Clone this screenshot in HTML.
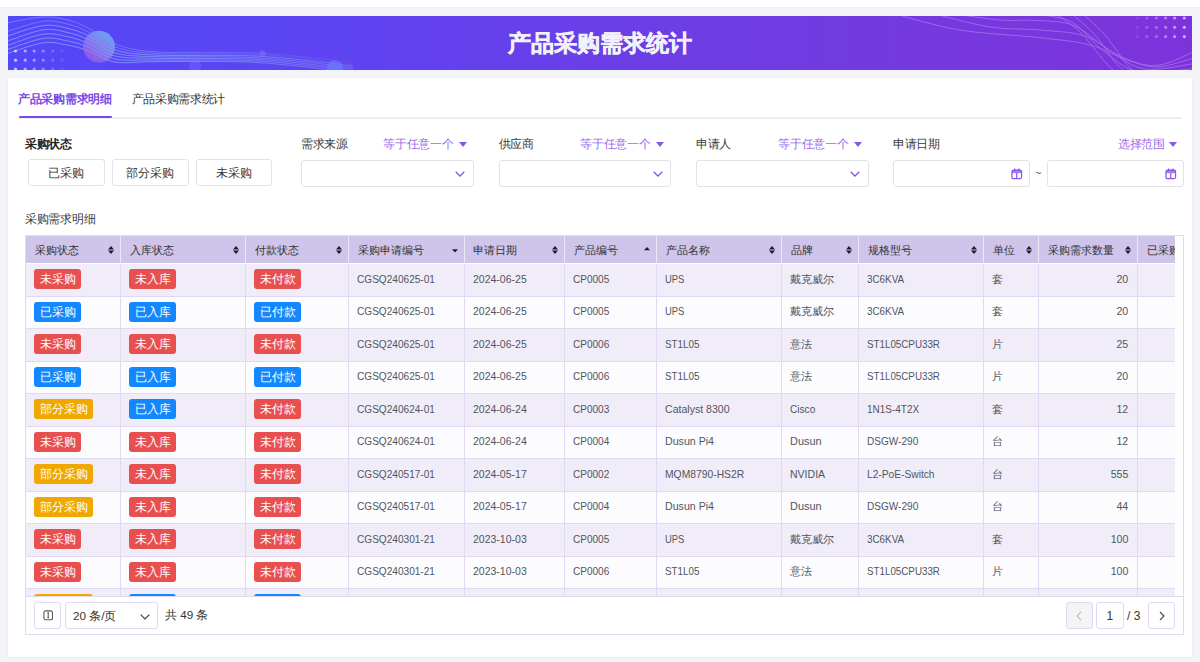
<!DOCTYPE html>
<html><head><meta charset="utf-8">
<style>
*{box-sizing:border-box;margin:0;padding:0}
html,body{width:1200px;height:662px;overflow:hidden}
body{background:#f3f4f8;font-family:"Liberation Sans",sans-serif;position:relative;color:#333}
.topw{position:absolute;left:0;top:0;width:1200px;height:7px;background:#fff;box-shadow:0 0 2px rgba(0,0,0,0.06)}
.banner{position:absolute;left:8px;top:16px;width:1184px;height:54px;overflow:hidden;
 background:linear-gradient(90deg,#5347f8 0%,#5a45f4 20%,#6e3de4 58%,#7d33db 100%)}
.banner .title{position:absolute;left:0;top:0;width:1184px;height:54px;line-height:54px;text-align:center;color:#f2f0f8;font-size:22.8px;font-weight:bold;letter-spacing:0;-webkit-text-stroke:0.5px #f2f0f8}
.card{position:absolute;left:8px;top:78px;width:1184px;height:579px;background:#fff;box-shadow:0 1px 3px rgba(20,20,60,0.05)}
.abs{position:absolute;white-space:nowrap}
.tab1{color:#7a47e6;font-weight:bold;font-size:11.8px;letter-spacing:-0.3px}
.tab2{color:#333;font-size:11.8px;letter-spacing:-0.3px}
.lbl{font-size:11.7px;letter-spacing:-0.3px;color:#3a3a3a}
.lblb{font-size:11.7px;letter-spacing:-0.3px;color:#222;font-weight:bold}
.eq{font-size:11.7px;letter-spacing:-0.3px;color:#9a6ce8}
.btn{position:absolute;top:159px;width:76.5px;height:26.5px;border:1px solid #e3e3e6;border-radius:3px;background:#fff;font-size:11.7px;color:#333;text-align:center;line-height:26.5px}
.sel{position:absolute;top:160px;height:26.5px;border:1px solid #e3e3e6;border-radius:3px;background:#fff}
.tbox{position:absolute;left:25px;top:235px;width:1159px;height:400px;border:1px solid #e2daf3}
.hdr{position:absolute;left:26px;width:1149px;background:#cfc4ea}
.ht{position:absolute;font-size:10.8px;color:#333;white-space:nowrap}
.si{position:absolute;fill:#1c1c24}
.hsep{position:absolute;width:1px;background:#ece6f7}
.row{position:absolute;left:26px;width:1149px}
.odd{background:#f0edf8}
.even{background:#fcfcfe}
.rsep{position:absolute;left:26px;width:1149px;height:1px;background:#e1d8f2}
.bsep{position:absolute;width:1px;background:#e1d8f2}
.bd{position:absolute;height:20px;line-height:20px;padding:0 5.3px;border-radius:3px;font-size:11.7px;color:#fff;white-space:nowrap}
.bd.r{background:#e85050}
.bd.b{background:#1387fd}
.bd.o{background:#f0a800}
.tx{position:absolute;font-size:11px;color:#50555f;white-space:nowrap}
.clip{position:absolute;left:0;top:0;width:1175px;height:596px;overflow:hidden}
.pbtn{position:absolute;top:602px;height:26.5px;border:1px solid #e0d8f4;border-radius:3px;background:#fff}
</style></head><body>
<div class="topw"></div>
<div class="banner">
<svg width="1184" height="54" viewBox="0 0 1184 54" style="position:absolute;left:0;top:0">
 <defs>
  <linearGradient id="cg" x1="0.85" y1="0.1" x2="0.2" y2="0.9">
   <stop offset="0" stop-color="#70a8f6"/><stop offset="1" stop-color="#9356e8"/>
  </linearGradient>
  <linearGradient id="lg" gradientUnits="userSpaceOnUse" x1="0" y1="0" x2="340" y2="0">
   <stop offset="0" stop-color="#8fb0ff" stop-opacity="1"/><stop offset="0.45" stop-color="#8fb0ff" stop-opacity="0.9"/><stop offset="1" stop-color="#8fb0ff" stop-opacity="0.15"/>
  </linearGradient>
 </defs>
 <g fill="none" stroke="url(#lg)" stroke-width="0.8" opacity="0.6">
  <path d="M-2.0 7.0 C4.2 6.0 24.7 1.5 35.0 1.0 C45.3 0.5 52.5 2.2 60.0 4.0 C67.5 5.8 72.2 8.0 80.0 12.0 C87.8 16.0 95.3 24.0 107.0 28.0 C118.7 32.0 126.2 34.5 150.0 36.0 C173.8 37.5 217.5 35.3 250.0 37.0 C282.5 38.7 329.2 44.5 345.0 46.0"/>
  <path d="M-2.0 15.8 C4.2 14.1 24.7 6.6 35.0 5.3 C45.3 4.0 52.5 6.4 60.0 8.2 C67.5 9.9 72.2 12.0 80.0 15.8 C87.8 19.6 95.3 27.4 107.0 31.0 C118.7 34.6 126.2 36.3 150.0 37.6 C173.8 38.9 217.5 36.9 250.0 38.6 C282.5 40.3 329.2 46.3 345.0 47.8"/>
  <path d="M-2.0 20.5 C4.2 18.7 24.7 10.9 35.0 9.6 C45.3 8.2 52.5 10.7 60.0 12.4 C67.5 14.1 72.2 16.0 80.0 19.6 C87.8 23.2 95.3 30.7 107.0 34.0 C118.7 37.3 126.2 38.2 150.0 39.2 C173.8 40.2 217.5 38.5 250.0 40.2 C282.5 41.9 329.2 48.0 345.0 49.6"/>
  <path d="M-2.0 25.5 C4.2 23.6 24.7 15.4 35.0 13.9 C45.3 12.4 52.5 15.0 60.0 16.6 C67.5 18.2 72.2 20.0 80.0 23.4 C87.8 26.8 95.3 34.1 107.0 37.0 C118.7 39.9 126.2 40.0 150.0 40.8 C173.8 41.6 217.5 40.0 250.0 41.8 C282.5 43.6 329.2 49.8 345.0 51.4"/>
  <path d="M-2.0 30.0 C4.2 28.0 24.7 19.7 35.0 18.2 C45.3 16.7 52.5 19.3 60.0 20.8 C67.5 22.3 72.2 24.0 80.0 27.2 C87.8 30.4 95.3 37.5 107.0 40.0 C118.7 42.5 126.2 41.8 150.0 42.4 C173.8 43.0 217.5 41.6 250.0 43.4 C282.5 45.2 329.2 51.6 345.0 53.2"/>
  <path d="M-2.0 34.0 C4.2 32.1 24.7 24.0 35.0 22.5 C45.3 21.0 52.5 23.6 60.0 25.0 C67.5 26.4 72.2 28.0 80.0 31.0 C87.8 34.0 95.3 40.8 107.0 43.0 C118.7 45.2 126.2 43.7 150.0 44.0 C173.8 44.3 217.5 43.2 250.0 45.0 C282.5 46.8 329.2 53.3 345.0 55.0"/>
  <path d="M-2.0 38.0 C4.2 36.1 24.7 28.3 35.0 26.8 C45.3 25.3 52.5 27.9 60.0 29.2 C67.5 30.5 72.2 32.0 80.0 34.8 C87.8 37.6 95.3 44.2 107.0 46.0 C118.7 47.8 126.2 45.5 150.0 45.6 C173.8 45.7 217.5 44.7 250.0 46.6 C282.5 48.5 329.2 55.1 345.0 56.8"/>
 </g>
 <circle cx="91" cy="30.7" r="15.9" fill="url(#cg)" opacity="0.95"/>
 <g fill="none" stroke="#a8c4ff" stroke-width="0.7" opacity="0.35">
  <path d="M-2.0 20.5 C4.2 18.7 24.7 10.9 35.0 9.6 C45.3 8.2 52.5 10.7 60.0 12.4 C67.5 14.1 72.2 16.0 80.0 19.6 C87.8 23.2 95.3 30.7 107.0 34.0 C118.7 37.3 126.2 38.2 150.0 39.2 C173.8 40.2 217.5 38.5 250.0 40.2 C282.5 41.9 329.2 48.0 345.0 49.6"/>
  <path d="M-2.0 25.5 C4.2 23.6 24.7 15.4 35.0 13.9 C45.3 12.4 52.5 15.0 60.0 16.6 C67.5 18.2 72.2 20.0 80.0 23.4 C87.8 26.8 95.3 34.1 107.0 37.0 C118.7 39.9 126.2 40.0 150.0 40.8 C173.8 41.6 217.5 40.0 250.0 41.8 C282.5 43.6 329.2 49.8 345.0 51.4"/>
  <path d="M-2.0 30.0 C4.2 28.0 24.7 19.7 35.0 18.2 C45.3 16.7 52.5 19.3 60.0 20.8 C67.5 22.3 72.2 24.0 80.0 27.2 C87.8 30.4 95.3 37.5 107.0 40.0 C118.7 42.5 126.2 41.8 150.0 42.4 C173.8 43.0 217.5 41.6 250.0 43.4 C282.5 45.2 329.2 51.6 345.0 53.2"/>
  <path d="M-2.0 34.0 C4.2 32.1 24.7 24.0 35.0 22.5 C45.3 21.0 52.5 23.6 60.0 25.0 C67.5 26.4 72.2 28.0 80.0 31.0 C87.8 34.0 95.3 40.8 107.0 43.0 C118.7 45.2 126.2 43.7 150.0 44.0 C173.8 44.3 217.5 43.2 250.0 45.0 C282.5 46.8 329.2 53.3 345.0 55.0"/>
  <path d="M-2.0 38.0 C4.2 36.1 24.7 28.3 35.0 26.8 C45.3 25.3 52.5 27.9 60.0 29.2 C67.5 30.5 72.2 32.0 80.0 34.8 C87.8 37.6 95.3 44.2 107.0 46.0 C118.7 47.8 126.2 45.5 150.0 45.6 C173.8 45.7 217.5 44.7 250.0 46.6 C282.5 48.5 329.2 55.1 345.0 56.8"/>
 </g>
 <circle cx="254.5" cy="37.3" r="3" fill="#8fa8ff" opacity="0.25"/>
 <circle cx="187.3" cy="49.8" r="6" fill="#8fa8ff" opacity="0.18"/>
 <circle cx="327" cy="52" r="8" fill="#70a0ff" opacity="0.35"/>
 <g fill="#fff">
  <circle cx="7.5" cy="35" r="1.6" opacity="0.65"/><circle cx="17.2" cy="35" r="1.6" opacity="0.55"/><circle cx="26.2" cy="35" r="1.6" opacity="0.45"/><circle cx="35.2" cy="35" r="1.6" opacity="0.35"/><circle cx="44.8" cy="35" r="1.6" opacity="0.22"/><circle cx="54" cy="35" r="1.6" opacity="0.1"/>
  <circle cx="7.5" cy="44.2" r="1.6" opacity="0.65"/><circle cx="17.2" cy="44.2" r="1.6" opacity="0.55"/><circle cx="26.2" cy="44.2" r="1.6" opacity="0.45"/><circle cx="35.2" cy="44.2" r="1.6" opacity="0.35"/><circle cx="44.8" cy="44.2" r="1.6" opacity="0.22"/><circle cx="54" cy="44.2" r="1.6" opacity="0.1"/>
  <circle cx="7.5" cy="53" r="1.6" opacity="0.65"/><circle cx="17.2" cy="53" r="1.6" opacity="0.55"/><circle cx="26.2" cy="53" r="1.6" opacity="0.45"/><circle cx="35.2" cy="53" r="1.6" opacity="0.35"/><circle cx="44.8" cy="53" r="1.6" opacity="0.22"/><circle cx="54" cy="53" r="1.6" opacity="0.1"/>
 </g>
 <g fill="none" stroke="#c09cf6" stroke-width="0.8" opacity="0.6" transform="translate(-8,-16)">
  <path d="M895.0 14.0 C905.8 16.7 935.8 26.1 960.0 30.0 C984.2 34.0 1018.3 35.2 1040.0 37.7 C1061.7 40.2 1075.0 41.1 1090.0 45.0 C1105.0 48.9 1118.3 57.7 1130.0 61.0 C1141.7 64.3 1149.3 66.6 1160.0 65.0 C1170.7 63.4 1188.3 53.8 1194.0 51.6"/>
  <path d="M935.0 14.0 C944.2 16.2 972.5 24.3 990.0 27.0 C1007.5 29.7 1024.2 28.5 1040.0 30.0 C1055.8 31.5 1071.7 31.7 1085.0 36.0 C1098.3 40.3 1108.3 50.8 1120.0 56.0 C1131.7 61.2 1142.7 66.7 1155.0 67.0 C1167.3 67.3 1187.5 59.5 1194.0 58.0"/>
  <path d="M955.0 14.0 C962.5 15.0 985.8 18.9 1000.0 20.0 C1014.2 21.1 1027.5 19.5 1040.0 20.5 C1052.5 21.5 1063.3 20.9 1075.0 26.0 C1086.7 31.1 1098.3 43.8 1110.0 51.0 C1121.7 58.2 1131.0 66.9 1145.0 69.0 C1159.0 71.1 1185.8 64.5 1194.0 63.6"/>
  <path d="M1030.0 14.0 C1034.2 14.5 1047.5 15.3 1055.0 17.0 C1062.5 18.7 1067.5 18.8 1075.0 24.0 C1082.5 29.2 1090.8 40.5 1100.0 48.0 C1109.2 55.5 1120.0 65.0 1130.0 69.0 C1140.0 73.0 1149.3 72.1 1160.0 72.0 C1170.7 71.9 1188.3 69.0 1194.0 68.4"/>
  <path d="M1056.0 14.0 C1060.0 17.0 1071.8 24.0 1080.0 32.0 C1088.2 40.0 1099.0 55.3 1105.0 62.0 C1111.0 68.7 1114.2 70.3 1116.0 72.0"/>
  <path d="M1072.0 14.0 C1075.8 17.5 1087.8 27.0 1095.0 35.0 C1102.2 43.0 1109.8 55.8 1115.0 62.0 C1120.2 68.2 1124.2 70.3 1126.0 72.0"/>
  <path d="M1083.0 14.0 C1086.7 17.5 1098.0 27.0 1105.0 35.0 C1112.0 43.0 1120.0 55.8 1125.0 62.0 C1130.0 68.2 1133.3 70.3 1135.0 72.0"/>
 </g>
 <g fill="#fff">
  <circle cx="1129.6" cy="2" r="1.6" opacity="0.1"/><circle cx="1138.9" cy="2" r="1.6" opacity="0.2"/><circle cx="1148.5" cy="2" r="1.6" opacity="0.3"/><circle cx="1157.6" cy="2" r="1.6" opacity="0.4"/><circle cx="1166.6" cy="2" r="1.6" opacity="0.5"/><circle cx="1176.3" cy="2" r="1.6" opacity="0.6"/>
  <circle cx="1129.6" cy="11.3" r="1.6" opacity="0.1"/><circle cx="1138.9" cy="11.3" r="1.6" opacity="0.2"/><circle cx="1148.5" cy="11.3" r="1.6" opacity="0.3"/><circle cx="1157.6" cy="11.3" r="1.6" opacity="0.4"/><circle cx="1166.6" cy="11.3" r="1.6" opacity="0.5"/><circle cx="1176.3" cy="11.3" r="1.6" opacity="0.6"/>
  <circle cx="1129.6" cy="20.6" r="1.6" opacity="0.1"/><circle cx="1138.9" cy="20.6" r="1.6" opacity="0.2"/><circle cx="1148.5" cy="20.6" r="1.6" opacity="0.3"/><circle cx="1157.6" cy="20.6" r="1.6" opacity="0.4"/><circle cx="1166.6" cy="20.6" r="1.6" opacity="0.5"/><circle cx="1176.3" cy="20.6" r="1.6" opacity="0.6"/>
 </g>
</svg>
<div class="title">产品采购需求统计</div>
</div>
<div class="card"></div>

<!-- tabs -->
<div class="abs tab1" style="left:18px;top:91.5px">产品采购需求明细</div>
<div class="abs tab2" style="left:131.5px;top:91.5px">产品采购需求统计</div>
<div class="abs" style="left:18px;top:117px;width:1164px;height:2px;background:#eeeef1"></div>
<div class="abs" style="left:18.5px;top:116px;width:93px;height:2px;border-radius:1px;background:#7b48e8"></div>

<!-- filters -->
<div class="abs lblb" style="left:25px;top:137px">采购状态</div>
<div class="btn" style="left:28px">已采购</div>
<div class="btn" style="left:112px">部分采购</div>
<div class="btn" style="left:195.5px">未采购</div>

<div class="abs lbl" style="left:301px;top:137px">需求来源</div>
<div class="abs eq" style="right:746.5px;top:137px">等于任意一个</div>
<svg class="abs" style="left:458.5px;top:141.5px" width="8" height="5" viewBox="0 0 8 5"><path d="M0 0H8L4 5Z" fill="#8a55ea"/></svg>
<div class="sel" style="left:301px;width:172.5px"><svg style="position:absolute;left:153px;top:10px" width="10" height="6" viewBox="0 0 10 6"><path d="M0.7 0.7L5 5L9.3 0.7" fill="none" stroke="#8a55ea" stroke-width="1.3"/></svg></div>

<div class="abs lbl" style="left:498.5px;top:137px">供应商</div>
<div class="abs eq" style="right:549.5px;top:137px">等于任意一个</div>
<svg class="abs" style="left:656px;top:141.5px" width="8" height="5" viewBox="0 0 8 5"><path d="M0 0H8L4 5Z" fill="#8a55ea"/></svg>
<div class="sel" style="left:498.5px;width:172px"><svg style="position:absolute;left:153px;top:10px" width="10" height="6" viewBox="0 0 10 6"><path d="M0.7 0.7L5 5L9.3 0.7" fill="none" stroke="#8a55ea" stroke-width="1.3"/></svg></div>

<div class="abs lbl" style="left:696px;top:137px">申请人</div>
<div class="abs eq" style="right:351.5px;top:137px">等于任意一个</div>
<svg class="abs" style="left:854px;top:141.5px" width="8" height="5" viewBox="0 0 8 5"><path d="M0 0H8L4 5Z" fill="#8a55ea"/></svg>
<div class="sel" style="left:696px;width:172.5px"><svg style="position:absolute;left:153px;top:10px" width="10" height="6" viewBox="0 0 10 6"><path d="M0.7 0.7L5 5L9.3 0.7" fill="none" stroke="#8a55ea" stroke-width="1.3"/></svg></div>

<div class="abs lbl" style="left:893px;top:137px">申请日期</div>
<div class="abs eq" style="right:35.2px;top:137px">选择范围</div>
<svg class="abs" style="left:1168.5px;top:141.5px" width="8" height="5" viewBox="0 0 8 5"><path d="M0 0H8L4 5Z" fill="#8a55ea"/></svg>
<div class="sel" style="left:893px;width:137px"><svg style="position:absolute;left:117px;top:7.2px" width="11.5" height="11.5" viewBox="0 0 12 12"><rect x="1" y="2" width="10" height="3.4" fill="#a27cf0"/><g fill="none" stroke="#8a55ea" stroke-width="1.3"><rect x="1" y="2.3" width="10" height="8.8" rx="1.6"/><path d="M3.8 0.6V3M8.2 0.6V3M6 5V11"/></g></svg></div>
<div class="abs" style="left:1035px;top:167px;font-size:11px;color:#555">~</div>
<div class="sel" style="left:1047px;width:137px"><svg style="position:absolute;left:117px;top:7.2px" width="11.5" height="11.5" viewBox="0 0 12 12"><rect x="1" y="2" width="10" height="3.4" fill="#a27cf0"/><g fill="none" stroke="#8a55ea" stroke-width="1.3"><rect x="1" y="2.3" width="10" height="8.8" rx="1.6"/><path d="M3.8 0.6V3M8.2 0.6V3M6 5V11"/></g></svg></div>

<div class="abs lbl" style="left:25px;top:212px">采购需求明细</div>

<!-- table -->
<div class="tbox"></div>
<div class="clip">
<div class="hdr" style="top:235.5px;height:27.5px"></div>
<div class="ht" style="left:34.5px;top:237.0px;height:27.5px;line-height:27.5px">采购状态</div>
<svg class="si"  style="top:245.5px;left:108.0px" width="6" height="8" viewBox="0 0 6 8"><path d="M0 3.5L3 0L6 3.5Z"/><path d="M0 4.5L3 8L6 4.5Z"/></svg>
<div class="ht" style="left:129.5px;top:237.0px;height:27.5px;line-height:27.5px">入库状态</div>
<svg class="si"  style="top:245.5px;left:233.0px" width="6" height="8" viewBox="0 0 6 8"><path d="M0 3.5L3 0L6 3.5Z"/><path d="M0 4.5L3 8L6 4.5Z"/></svg>
<div class="ht" style="left:254.5px;top:237.0px;height:27.5px;line-height:27.5px">付款状态</div>
<svg class="si"  style="top:245.5px;left:336.0px" width="6" height="8" viewBox="0 0 6 8"><path d="M0 3.5L3 0L6 3.5Z"/><path d="M0 4.5L3 8L6 4.5Z"/></svg>
<div class="ht" style="left:357.5px;top:237.0px;height:27.5px;line-height:27.5px">采购申请编号</div>
<svg class="si"  style="top:245.5px;left:451.5px" width="6" height="8" viewBox="0 0 6 8"><path d="M0 3.2L3 6.5L6 3.2Z"/></svg>
<div class="ht" style="left:473.0px;top:237.0px;height:27.5px;line-height:27.5px">申请日期</div>
<svg class="si"  style="top:245.5px;left:552.0px" width="6" height="8" viewBox="0 0 6 8"><path d="M0 3.5L3 0L6 3.5Z"/><path d="M0 4.5L3 8L6 4.5Z"/></svg>
<div class="ht" style="left:573.5px;top:237.0px;height:27.5px;line-height:27.5px">产品编号</div>
<svg class="si"  style="top:245.5px;left:644.0px" width="6" height="8" viewBox="0 0 6 8"><path d="M0 4.3L3 1L6 4.3Z"/></svg>
<div class="ht" style="left:665.5px;top:237.0px;height:27.5px;line-height:27.5px">产品名称</div>
<svg class="si"  style="top:245.5px;left:769.0px" width="6" height="8" viewBox="0 0 6 8"><path d="M0 3.5L3 0L6 3.5Z"/><path d="M0 4.5L3 8L6 4.5Z"/></svg>
<div class="ht" style="left:790.5px;top:237.0px;height:27.5px;line-height:27.5px">品牌</div>
<svg class="si"  style="top:245.5px;left:846.0px" width="6" height="8" viewBox="0 0 6 8"><path d="M0 3.5L3 0L6 3.5Z"/><path d="M0 4.5L3 8L6 4.5Z"/></svg>
<div class="ht" style="left:867.5px;top:237.0px;height:27.5px;line-height:27.5px">规格型号</div>
<svg class="si"  style="top:245.5px;left:971.0px" width="6" height="8" viewBox="0 0 6 8"><path d="M0 3.5L3 0L6 3.5Z"/><path d="M0 4.5L3 8L6 4.5Z"/></svg>
<div class="ht" style="left:992.5px;top:237.0px;height:27.5px;line-height:27.5px">单位</div>
<svg class="si"  style="top:245.5px;left:1026.0px" width="6" height="8" viewBox="0 0 6 8"><path d="M0 3.5L3 0L6 3.5Z"/><path d="M0 4.5L3 8L6 4.5Z"/></svg>
<div class="ht" style="left:1047.5px;top:237.0px;height:27.5px;line-height:27.5px">采购需求数量</div>
<svg class="si"  style="top:245.5px;left:1125.0px" width="6" height="8" viewBox="0 0 6 8"><path d="M0 3.5L3 0L6 3.5Z"/><path d="M0 4.5L3 8L6 4.5Z"/></svg>
<div class="ht" style="left:1146.5px;top:237.0px;height:27.5px;line-height:27.5px">已采购数量</div>
<div class="hsep" style="left:120.0px;top:235.5px;height:27.5px"></div>
<div class="hsep" style="left:245.0px;top:235.5px;height:27.5px"></div>
<div class="hsep" style="left:348.0px;top:235.5px;height:27.5px"></div>
<div class="hsep" style="left:463.5px;top:235.5px;height:27.5px"></div>
<div class="hsep" style="left:564.0px;top:235.5px;height:27.5px"></div>
<div class="hsep" style="left:656.0px;top:235.5px;height:27.5px"></div>
<div class="hsep" style="left:781.0px;top:235.5px;height:27.5px"></div>
<div class="hsep" style="left:858.0px;top:235.5px;height:27.5px"></div>
<div class="hsep" style="left:983.0px;top:235.5px;height:27.5px"></div>
<div class="hsep" style="left:1038.0px;top:235.5px;height:27.5px"></div>
<div class="hsep" style="left:1137.0px;top:235.5px;height:27.5px"></div>
<div class="row odd" style="top:263.9px;height:32.5px"></div>
<div class="bd r" style="left:34.3px;top:269.1px">未采购</div>
<div class="bd r" style="left:129.3px;top:269.1px">未入库</div>
<div class="bd r" style="left:254.3px;top:269.1px">未付款</div>
<div class="tx" style="left:357.3px;top:262.9px;height:32.5px;line-height:32.5px;transform:scaleX(0.917);transform-origin:0 50%">CGSQ240625-01</div>
<div class="tx" style="left:472.8px;top:262.9px;height:32.5px;line-height:32.5px;transform:scaleX(0.955);transform-origin:0 50%">2024-06-25</div>
<div class="tx" style="left:573.3px;top:262.9px;height:32.5px;line-height:32.5px;transform:scaleX(0.913);transform-origin:0 50%">CP0005</div>
<div class="tx" style="left:665.3px;top:262.9px;height:32.5px;line-height:32.5px;transform:scaleX(0.858);transform-origin:0 50%">UPS</div>
<div class="tx" style="left:790.3px;top:262.9px;height:32.5px;line-height:32.5px;transform:scaleX(1);transform-origin:0 50%">戴克威尔</div>
<div class="tx" style="left:867.3px;top:262.9px;height:32.5px;line-height:32.5px;transform:scaleX(0.895);transform-origin:0 50%">3C6KVA</div>
<div class="tx" style="left:992.3px;top:262.9px;height:32.5px;line-height:32.5px;transform:scaleX(1);transform-origin:0 50%">套</div>
<div class="tx num" style="right:46.5px;top:262.9px;height:32.5px;line-height:32.5px;transform:scaleX(0.962);transform-origin:100% 50%">20</div>
<div class="row even" style="top:296.4px;height:32.5px"></div>
<div class="bd b" style="left:34.3px;top:301.6px">已采购</div>
<div class="bd b" style="left:129.3px;top:301.6px">已入库</div>
<div class="bd b" style="left:254.3px;top:301.6px">已付款</div>
<div class="tx" style="left:357.3px;top:295.4px;height:32.5px;line-height:32.5px;transform:scaleX(0.917);transform-origin:0 50%">CGSQ240625-01</div>
<div class="tx" style="left:472.8px;top:295.4px;height:32.5px;line-height:32.5px;transform:scaleX(0.955);transform-origin:0 50%">2024-06-25</div>
<div class="tx" style="left:573.3px;top:295.4px;height:32.5px;line-height:32.5px;transform:scaleX(0.913);transform-origin:0 50%">CP0005</div>
<div class="tx" style="left:665.3px;top:295.4px;height:32.5px;line-height:32.5px;transform:scaleX(0.858);transform-origin:0 50%">UPS</div>
<div class="tx" style="left:790.3px;top:295.4px;height:32.5px;line-height:32.5px;transform:scaleX(1);transform-origin:0 50%">戴克威尔</div>
<div class="tx" style="left:867.3px;top:295.4px;height:32.5px;line-height:32.5px;transform:scaleX(0.895);transform-origin:0 50%">3C6KVA</div>
<div class="tx" style="left:992.3px;top:295.4px;height:32.5px;line-height:32.5px;transform:scaleX(1);transform-origin:0 50%">套</div>
<div class="tx num" style="right:46.5px;top:295.4px;height:32.5px;line-height:32.5px;transform:scaleX(0.962);transform-origin:100% 50%">20</div>
<div class="row odd" style="top:328.9px;height:32.5px"></div>
<div class="bd r" style="left:34.3px;top:334.1px">未采购</div>
<div class="bd r" style="left:129.3px;top:334.1px">未入库</div>
<div class="bd r" style="left:254.3px;top:334.1px">未付款</div>
<div class="tx" style="left:357.3px;top:327.9px;height:32.5px;line-height:32.5px;transform:scaleX(0.917);transform-origin:0 50%">CGSQ240625-01</div>
<div class="tx" style="left:472.8px;top:327.9px;height:32.5px;line-height:32.5px;transform:scaleX(0.955);transform-origin:0 50%">2024-06-25</div>
<div class="tx" style="left:573.3px;top:327.9px;height:32.5px;line-height:32.5px;transform:scaleX(0.913);transform-origin:0 50%">CP0006</div>
<div class="tx" style="left:665.3px;top:327.9px;height:32.5px;line-height:32.5px;transform:scaleX(0.894);transform-origin:0 50%">ST1L05</div>
<div class="tx" style="left:790.3px;top:327.9px;height:32.5px;line-height:32.5px;transform:scaleX(1);transform-origin:0 50%">意法</div>
<div class="tx" style="left:867.3px;top:327.9px;height:32.5px;line-height:32.5px;transform:scaleX(0.89);transform-origin:0 50%">ST1L05CPU33R</div>
<div class="tx" style="left:992.3px;top:327.9px;height:32.5px;line-height:32.5px;transform:scaleX(1);transform-origin:0 50%">片</div>
<div class="tx num" style="right:46.5px;top:327.9px;height:32.5px;line-height:32.5px;transform:scaleX(0.962);transform-origin:100% 50%">25</div>
<div class="row even" style="top:361.4px;height:32.5px"></div>
<div class="bd b" style="left:34.3px;top:366.6px">已采购</div>
<div class="bd b" style="left:129.3px;top:366.6px">已入库</div>
<div class="bd b" style="left:254.3px;top:366.6px">已付款</div>
<div class="tx" style="left:357.3px;top:360.4px;height:32.5px;line-height:32.5px;transform:scaleX(0.917);transform-origin:0 50%">CGSQ240625-01</div>
<div class="tx" style="left:472.8px;top:360.4px;height:32.5px;line-height:32.5px;transform:scaleX(0.955);transform-origin:0 50%">2024-06-25</div>
<div class="tx" style="left:573.3px;top:360.4px;height:32.5px;line-height:32.5px;transform:scaleX(0.913);transform-origin:0 50%">CP0006</div>
<div class="tx" style="left:665.3px;top:360.4px;height:32.5px;line-height:32.5px;transform:scaleX(0.894);transform-origin:0 50%">ST1L05</div>
<div class="tx" style="left:790.3px;top:360.4px;height:32.5px;line-height:32.5px;transform:scaleX(1);transform-origin:0 50%">意法</div>
<div class="tx" style="left:867.3px;top:360.4px;height:32.5px;line-height:32.5px;transform:scaleX(0.89);transform-origin:0 50%">ST1L05CPU33R</div>
<div class="tx" style="left:992.3px;top:360.4px;height:32.5px;line-height:32.5px;transform:scaleX(1);transform-origin:0 50%">片</div>
<div class="tx num" style="right:46.5px;top:360.4px;height:32.5px;line-height:32.5px;transform:scaleX(0.962);transform-origin:100% 50%">20</div>
<div class="row odd" style="top:393.9px;height:32.5px"></div>
<div class="bd o" style="left:34.3px;top:399.1px">部分采购</div>
<div class="bd b" style="left:129.3px;top:399.1px">已入库</div>
<div class="bd r" style="left:254.3px;top:399.1px">未付款</div>
<div class="tx" style="left:357.3px;top:392.9px;height:32.5px;line-height:32.5px;transform:scaleX(0.917);transform-origin:0 50%">CGSQ240624-01</div>
<div class="tx" style="left:472.8px;top:392.9px;height:32.5px;line-height:32.5px;transform:scaleX(0.955);transform-origin:0 50%">2024-06-24</div>
<div class="tx" style="left:573.3px;top:392.9px;height:32.5px;line-height:32.5px;transform:scaleX(0.913);transform-origin:0 50%">CP0003</div>
<div class="tx" style="left:665.3px;top:392.9px;height:32.5px;line-height:32.5px;transform:scaleX(0.96);transform-origin:0 50%">Catalyst 8300</div>
<div class="tx" style="left:790.3px;top:392.9px;height:32.5px;line-height:32.5px;transform:scaleX(0.919);transform-origin:0 50%">Cisco</div>
<div class="tx" style="left:867.3px;top:392.9px;height:32.5px;line-height:32.5px;transform:scaleX(0.907);transform-origin:0 50%">1N1S-4T2X</div>
<div class="tx" style="left:992.3px;top:392.9px;height:32.5px;line-height:32.5px;transform:scaleX(1);transform-origin:0 50%">套</div>
<div class="tx num" style="right:46.5px;top:392.9px;height:32.5px;line-height:32.5px;transform:scaleX(0.962);transform-origin:100% 50%">12</div>
<div class="row even" style="top:426.4px;height:32.5px"></div>
<div class="bd r" style="left:34.3px;top:431.6px">未采购</div>
<div class="bd r" style="left:129.3px;top:431.6px">未入库</div>
<div class="bd r" style="left:254.3px;top:431.6px">未付款</div>
<div class="tx" style="left:357.3px;top:425.4px;height:32.5px;line-height:32.5px;transform:scaleX(0.917);transform-origin:0 50%">CGSQ240624-01</div>
<div class="tx" style="left:472.8px;top:425.4px;height:32.5px;line-height:32.5px;transform:scaleX(0.955);transform-origin:0 50%">2024-06-24</div>
<div class="tx" style="left:573.3px;top:425.4px;height:32.5px;line-height:32.5px;transform:scaleX(0.913);transform-origin:0 50%">CP0004</div>
<div class="tx" style="left:665.3px;top:425.4px;height:32.5px;line-height:32.5px;transform:scaleX(0.965);transform-origin:0 50%">Dusun Pi4</div>
<div class="tx" style="left:790.3px;top:425.4px;height:32.5px;line-height:32.5px;transform:scaleX(0.992);transform-origin:0 50%">Dusun</div>
<div class="tx" style="left:867.3px;top:425.4px;height:32.5px;line-height:32.5px;transform:scaleX(0.914);transform-origin:0 50%">DSGW-290</div>
<div class="tx" style="left:992.3px;top:425.4px;height:32.5px;line-height:32.5px;transform:scaleX(1);transform-origin:0 50%">台</div>
<div class="tx num" style="right:46.5px;top:425.4px;height:32.5px;line-height:32.5px;transform:scaleX(0.962);transform-origin:100% 50%">12</div>
<div class="row odd" style="top:458.9px;height:32.5px"></div>
<div class="bd o" style="left:34.3px;top:464.1px">部分采购</div>
<div class="bd r" style="left:129.3px;top:464.1px">未入库</div>
<div class="bd r" style="left:254.3px;top:464.1px">未付款</div>
<div class="tx" style="left:357.3px;top:457.9px;height:32.5px;line-height:32.5px;transform:scaleX(0.917);transform-origin:0 50%">CGSQ240517-01</div>
<div class="tx" style="left:472.8px;top:457.9px;height:32.5px;line-height:32.5px;transform:scaleX(0.955);transform-origin:0 50%">2024-05-17</div>
<div class="tx" style="left:573.3px;top:457.9px;height:32.5px;line-height:32.5px;transform:scaleX(0.913);transform-origin:0 50%">CP0002</div>
<div class="tx" style="left:665.3px;top:457.9px;height:32.5px;line-height:32.5px;transform:scaleX(0.939);transform-origin:0 50%">MQM8790-HS2R</div>
<div class="tx" style="left:790.3px;top:457.9px;height:32.5px;line-height:32.5px;transform:scaleX(0.957);transform-origin:0 50%">NVIDIA</div>
<div class="tx" style="left:867.3px;top:457.9px;height:32.5px;line-height:32.5px;transform:scaleX(0.928);transform-origin:0 50%">L2-PoE-Switch</div>
<div class="tx" style="left:992.3px;top:457.9px;height:32.5px;line-height:32.5px;transform:scaleX(1);transform-origin:0 50%">台</div>
<div class="tx num" style="right:46.5px;top:457.9px;height:32.5px;line-height:32.5px;transform:scaleX(0.963);transform-origin:100% 50%">555</div>
<div class="row even" style="top:491.4px;height:32.5px"></div>
<div class="bd o" style="left:34.3px;top:496.6px">部分采购</div>
<div class="bd r" style="left:129.3px;top:496.6px">未入库</div>
<div class="bd r" style="left:254.3px;top:496.6px">未付款</div>
<div class="tx" style="left:357.3px;top:490.4px;height:32.5px;line-height:32.5px;transform:scaleX(0.917);transform-origin:0 50%">CGSQ240517-01</div>
<div class="tx" style="left:472.8px;top:490.4px;height:32.5px;line-height:32.5px;transform:scaleX(0.955);transform-origin:0 50%">2024-05-17</div>
<div class="tx" style="left:573.3px;top:490.4px;height:32.5px;line-height:32.5px;transform:scaleX(0.913);transform-origin:0 50%">CP0004</div>
<div class="tx" style="left:665.3px;top:490.4px;height:32.5px;line-height:32.5px;transform:scaleX(0.965);transform-origin:0 50%">Dusun Pi4</div>
<div class="tx" style="left:790.3px;top:490.4px;height:32.5px;line-height:32.5px;transform:scaleX(0.992);transform-origin:0 50%">Dusun</div>
<div class="tx" style="left:867.3px;top:490.4px;height:32.5px;line-height:32.5px;transform:scaleX(0.914);transform-origin:0 50%">DSGW-290</div>
<div class="tx" style="left:992.3px;top:490.4px;height:32.5px;line-height:32.5px;transform:scaleX(1);transform-origin:0 50%">台</div>
<div class="tx num" style="right:46.5px;top:490.4px;height:32.5px;line-height:32.5px;transform:scaleX(0.962);transform-origin:100% 50%">44</div>
<div class="row odd" style="top:523.9px;height:32.5px"></div>
<div class="bd r" style="left:34.3px;top:529.1px">未采购</div>
<div class="bd r" style="left:129.3px;top:529.1px">未入库</div>
<div class="bd r" style="left:254.3px;top:529.1px">未付款</div>
<div class="tx" style="left:357.3px;top:522.9px;height:32.5px;line-height:32.5px;transform:scaleX(0.917);transform-origin:0 50%">CGSQ240301-21</div>
<div class="tx" style="left:472.8px;top:522.9px;height:32.5px;line-height:32.5px;transform:scaleX(0.955);transform-origin:0 50%">2023-10-03</div>
<div class="tx" style="left:573.3px;top:522.9px;height:32.5px;line-height:32.5px;transform:scaleX(0.913);transform-origin:0 50%">CP0005</div>
<div class="tx" style="left:665.3px;top:522.9px;height:32.5px;line-height:32.5px;transform:scaleX(0.858);transform-origin:0 50%">UPS</div>
<div class="tx" style="left:790.3px;top:522.9px;height:32.5px;line-height:32.5px;transform:scaleX(1);transform-origin:0 50%">戴克威尔</div>
<div class="tx" style="left:867.3px;top:522.9px;height:32.5px;line-height:32.5px;transform:scaleX(0.895);transform-origin:0 50%">3C6KVA</div>
<div class="tx" style="left:992.3px;top:522.9px;height:32.5px;line-height:32.5px;transform:scaleX(1);transform-origin:0 50%">套</div>
<div class="tx num" style="right:46.5px;top:522.9px;height:32.5px;line-height:32.5px;transform:scaleX(0.963);transform-origin:100% 50%">100</div>
<div class="row even" style="top:556.4px;height:32.5px"></div>
<div class="bd r" style="left:34.3px;top:561.6px">未采购</div>
<div class="bd r" style="left:129.3px;top:561.6px">未入库</div>
<div class="bd r" style="left:254.3px;top:561.6px">未付款</div>
<div class="tx" style="left:357.3px;top:555.4px;height:32.5px;line-height:32.5px;transform:scaleX(0.917);transform-origin:0 50%">CGSQ240301-21</div>
<div class="tx" style="left:472.8px;top:555.4px;height:32.5px;line-height:32.5px;transform:scaleX(0.955);transform-origin:0 50%">2023-10-03</div>
<div class="tx" style="left:573.3px;top:555.4px;height:32.5px;line-height:32.5px;transform:scaleX(0.913);transform-origin:0 50%">CP0006</div>
<div class="tx" style="left:665.3px;top:555.4px;height:32.5px;line-height:32.5px;transform:scaleX(0.894);transform-origin:0 50%">ST1L05</div>
<div class="tx" style="left:790.3px;top:555.4px;height:32.5px;line-height:32.5px;transform:scaleX(1);transform-origin:0 50%">意法</div>
<div class="tx" style="left:867.3px;top:555.4px;height:32.5px;line-height:32.5px;transform:scaleX(0.89);transform-origin:0 50%">ST1L05CPU33R</div>
<div class="tx" style="left:992.3px;top:555.4px;height:32.5px;line-height:32.5px;transform:scaleX(1);transform-origin:0 50%">片</div>
<div class="tx num" style="right:46.5px;top:555.4px;height:32.5px;line-height:32.5px;transform:scaleX(0.963);transform-origin:100% 50%">100</div>
<div class="row odd" style="top:588.9px;height:32.5px"></div>
<div class="bd o" style="left:34.3px;top:594.1px">部分采购</div>
<div class="bd b" style="left:129.3px;top:594.1px">已入库</div>
<div class="bd b" style="left:254.3px;top:594.1px">已付款</div>
<div class="tx" style="left:357.3px;top:587.9px;height:32.5px;line-height:32.5px;transform:scaleX(0.917);transform-origin:0 50%">CGSQ240301-21</div>
<div class="tx" style="left:472.8px;top:587.9px;height:32.5px;line-height:32.5px;transform:scaleX(0.955);transform-origin:0 50%">2023-10-03</div>
<div class="tx" style="left:573.3px;top:587.9px;height:32.5px;line-height:32.5px;transform:scaleX(0.913);transform-origin:0 50%">CP0005</div>
<div class="tx" style="left:665.3px;top:587.9px;height:32.5px;line-height:32.5px;transform:scaleX(0.858);transform-origin:0 50%">UPS</div>
<div class="tx" style="left:790.3px;top:587.9px;height:32.5px;line-height:32.5px;transform:scaleX(1);transform-origin:0 50%">戴克威尔</div>
<div class="tx" style="left:867.3px;top:587.9px;height:32.5px;line-height:32.5px;transform:scaleX(0.895);transform-origin:0 50%">3C6KVA</div>
<div class="tx" style="left:992.3px;top:587.9px;height:32.5px;line-height:32.5px;transform:scaleX(1);transform-origin:0 50%">套</div>
<div class="tx num" style="right:46.5px;top:587.9px;height:32.5px;line-height:32.5px;transform:scaleX(0.963);transform-origin:100% 50%">100</div>
<div class="rsep" style="top:295.8px"></div>
<div class="rsep" style="top:328.3px"></div>
<div class="rsep" style="top:360.8px"></div>
<div class="rsep" style="top:393.3px"></div>
<div class="rsep" style="top:425.8px"></div>
<div class="rsep" style="top:458.3px"></div>
<div class="rsep" style="top:490.8px"></div>
<div class="rsep" style="top:523.3px"></div>
<div class="rsep" style="top:555.8px"></div>
<div class="rsep" style="top:588.3px"></div>
<div class="rsep" style="top:620.8px"></div>
<div class="bsep" style="left:120.0px;top:263.9px;height:332.1px"></div>
<div class="bsep" style="left:245.0px;top:263.9px;height:332.1px"></div>
<div class="bsep" style="left:348.0px;top:263.9px;height:332.1px"></div>
<div class="bsep" style="left:463.5px;top:263.9px;height:332.1px"></div>
<div class="bsep" style="left:564.0px;top:263.9px;height:332.1px"></div>
<div class="bsep" style="left:656.0px;top:263.9px;height:332.1px"></div>
<div class="bsep" style="left:781.0px;top:263.9px;height:332.1px"></div>
<div class="bsep" style="left:858.0px;top:263.9px;height:332.1px"></div>
<div class="bsep" style="left:983.0px;top:263.9px;height:332.1px"></div>
<div class="bsep" style="left:1038.0px;top:263.9px;height:332.1px"></div>
<div class="bsep" style="left:1137.0px;top:263.9px;height:332.1px"></div>
</div>
<div class="abs" style="left:26px;top:596px;width:1157px;height:1px;background:#e1d8f2"></div>

<!-- footer -->
<div class="pbtn" style="left:34px;width:26.5px"><svg style="position:absolute;left:8px;top:7.2px" width="10" height="10.5" viewBox="0 0 10 10.5"><g fill="none" stroke="#5a5a66" stroke-width="1.1"><rect x="0.9" y="0.9" width="8.6" height="8.8" rx="1.6"/><path d="M5.2 2.6V8M4.3 2.8H6.1M4.3 7.8H6.1"/></g></svg></div>
<div class="pbtn" style="left:65px;width:93px"><span class="abs" style="left:7px;top:5.5px;font-size:11.7px;color:#333">20 条/页</span><svg style="position:absolute;left:74px;top:10.5px" width="10" height="6" viewBox="0 0 10 6"><path d="M0.7 0.7L5 5L9.3 0.7" fill="none" stroke="#444" stroke-width="1.2"/></svg></div>
<div class="abs" style="left:165px;top:608px;font-size:11.7px;color:#333">共 49 条</div>

<div class="pbtn" style="left:1066px;width:26.5px;background:#f4f4f6"><svg style="position:absolute;left:8.5px;top:8px" width="6" height="10" viewBox="0 0 6 10"><path d="M5 0.8L1 5L5 9.2" fill="none" stroke="#bbb" stroke-width="1.1"/></svg></div>
<div class="pbtn" style="left:1096px;width:27.5px;text-align:center;font-size:12px;line-height:27.5px;color:#333">1</div>
<div class="abs" style="left:1127px;top:609.2px;font-size:12px;color:#333">/ 3</div>
<div class="pbtn" style="left:1148px;width:26.5px"><svg style="position:absolute;left:9.5px;top:8px" width="6" height="10" viewBox="0 0 6 10"><path d="M1 0.8L5 5L1 9.2" fill="none" stroke="#444" stroke-width="1.2"/></svg></div>
</body></html>
